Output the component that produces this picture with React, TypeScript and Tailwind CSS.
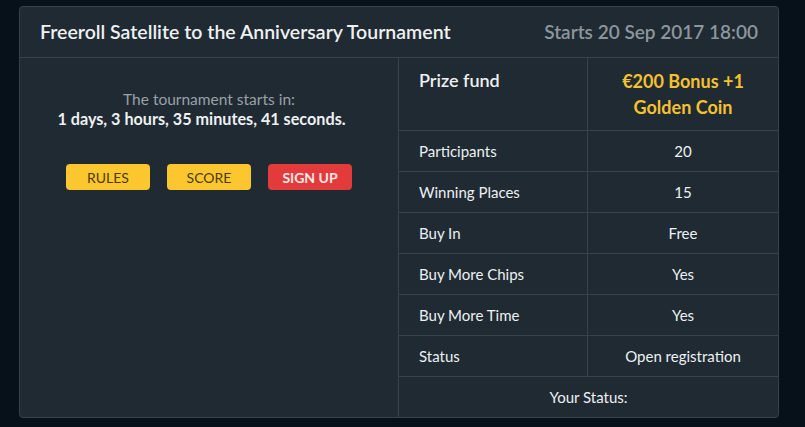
import React from 'react'

const rows = [
    { label: 'Participants', value: '20' },
    { label: 'Winning Places', value: '15' },
    { label: 'Buy In', value: 'Free' },
    { label: 'Buy More Chips', value: 'Yes' },
    { label: 'Buy More Time', value: 'Yes' },
    { label: 'Status', value: 'Open registration' },
]

const App = () => {
    return (
        <div className="min-h-[427px] bg-[#07111a] pl-[19px] pt-[6px] font-['Lato','Liberation_Sans',sans-serif] text-[#eef0f2]">
            <div className="w-[760px] rounded-[4px] border border-[#36434e] bg-[#1f2a33]">
                <div className="flex h-[51px] items-center justify-between border-b border-[#36434e] pl-[20px] pr-[20px]">
                    <div className="text-[19.5px] font-semibold">Freeroll Satellite to the Anniversary Tournament</div>
                    <div className="text-[19px] font-semibold text-[#8e969d]">Starts 20 Sep 2017 18:00</div>
                </div>
                <div className="flex">
                    <div className="w-[379px] shrink-0 border-r border-[#36434e] pt-[32px] text-center">
                        <div className="text-[15.5px] leading-[19px] text-[#9aa1a7]">The tournament starts in:</div>
                        <div className="pr-[15px] text-[16.2px] font-bold leading-[19px]">1 days, 3 hours, 35 minutes, 41 seconds.</div>
                        <div className="mt-[36px] flex justify-center gap-[17px]">
                            <button className="h-[26px] w-[84px] rounded-[4px] bg-[#fcc72e] text-[14px] text-[#4a3a0e]">RULES</button>
                            <button className="h-[26px] w-[84px] rounded-[4px] bg-[#fcc72e] text-[14px] text-[#4a3a0e]">SCORE</button>
                            <button className="h-[26px] w-[84px] rounded-[4px] bg-[#e33b3b] text-[14px] font-bold text-[#fde8e8]">SIGN UP</button>
                        </div>
                    </div>
                    <div className="flex-1">
                        <div className="flex h-[73px] border-b border-[#36434e]">
                            <div className="w-[189px] shrink-0 border-r border-[#36434e] pl-[20px] pt-[9px] text-[18px] font-semibold">Prize fund</div>
                            <div className="flex-1 pt-[10px] text-center text-[18px] font-bold leading-[26px] text-[#f5c12f]">
                                €200 Bonus +1
                                <br />
                                Golden Coin
                            </div>
                        </div>
                        {rows.map((row) => (
                            <div key={row.label} className="flex h-[41px] items-center border-b border-[#36434e] text-[15px]">
                                <div className="flex h-full w-[189px] shrink-0 items-center border-r border-[#36434e] pl-[20px]">{row.label}</div>
                                <div className="flex-1 text-center">{row.value}</div>
                            </div>
                        ))}
                        <div className="flex h-[40px] items-center justify-center text-[15px]">Your Status:</div>
                    </div>
                </div>
            </div>
        </div>
    )
}

export default App
